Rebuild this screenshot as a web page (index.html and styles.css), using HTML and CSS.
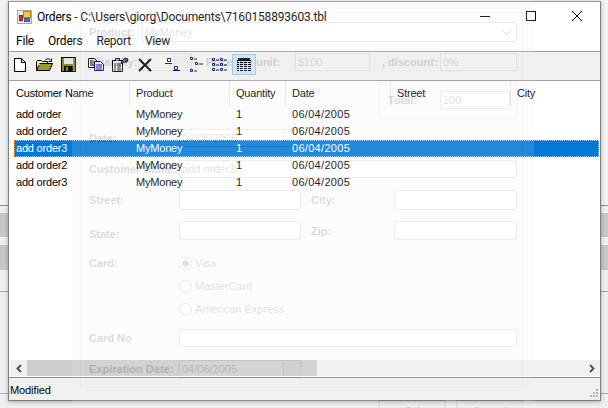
FILE: index.html
```html
<!DOCTYPE html>
<html lang="en">
<head>
<meta charset="utf-8">
<title>Orders</title>
<link rel="stylesheet" href="styles.css">
</head>
<body>
<div class="window">
  <div class="titlebar">
    <svg class="app-icon" width="15" height="14" viewBox="0 0 15 14"><rect x="0.500" y="0.500" width="14" height="13" fill="#e8e8e8" stroke="#a8a8a8"/><rect x="6.500" y="1.500" width="7" height="6" fill="#f5c83c" stroke="#b08a20"/><rect x="2.500" y="5.500" width="3" height="5" fill="#d8322c" stroke="#8a2020"/><rect x="7.500" y="8.500" width="5" height="3" fill="#3f80d8" stroke="#2a5aa0"/></svg>
    <span class="title-text">Orders - C:\Users\giorg\Documents\7160158893603.tbl</span>
    <div class="controls">
      <svg width="46" height="30" viewBox="0 0 46 30"><path d="M18 14.500h10" stroke="#000"/></svg>
      <svg width="46" height="30" viewBox="0 0 46 30"><rect x="18.500" y="9.500" width="9" height="9" fill="none" stroke="#000"/></svg>
      <svg width="46" height="30" viewBox="0 0 46 30"><path d="M18 9l10 10M28 9l-10 10" stroke="#000" fill="none"/></svg>
    </div>
  </div>
  <nav class="menubar">
    <span class="menu-item">File</span><span class="menu-item">Orders</span><span class="menu-item">Report</span><span class="menu-item">View</span>
  </nav>
  <div class="toolbar">
    <svg class="tool t-new" width="12" height="14" viewBox="0 0 12 14"><path d="M.5.500h7l4 4v9H.5z" fill="#fff" stroke="#000"/><path d="M7.500.5v4h4" fill="none" stroke="#000"/></svg>
    <svg class="tool t-open" width="17" height="13" viewBox="0 0 17 13"><path d="M.5 12.500v-9l1-1h4l1 1h5v2" fill="#f7f080" stroke="#000"/><path d="M.5 12.500l3-7h13l-3 7z" fill="#9a9a30" stroke="#000"/><path d="M2 5l2-1.500M2 7l2-1" stroke="#fff"/><path d="M9 2.500c1-2 4-2.500 6 0M15.500 .5v3h-3" fill="none" stroke="#000"/></svg>
    <svg class="tool t-save" width="15" height="15" viewBox="0 0 15 15"><rect x=".5" y=".5" width="14" height="14" fill="#8a8a20" stroke="#000"/><rect x="3" y="1" width="9" height="6" fill="#e4e4e4"/><rect x="3" y="9" width="9" height="5" fill="#101010"/><rect x="5" y="10" width="2" height="4" fill="#8a8a20"/></svg>
    <svg class="tool t-copy" width="16" height="13" viewBox="0 0 16 13"><path d="M.5.500h6l2 2v7h-8z" fill="#fff" stroke="#000"/><path d="M2 3h4M2 5h4M2 7h4" stroke="#000"/><path d="M6.500 3.500h6l3 3v6h-9z" fill="#fff" stroke="#000080"/><path d="M8 7h6M8 9h6M8 11h6" stroke="#000080"/></svg>
    <svg class="tool t-props" width="17" height="15" viewBox="0 0 17 15"><path d="M.5 3.500h10v11H.5z" fill="#fff" stroke="#000"/><path d="M2 7h2M5 7h4M2 9h2M5 9h4M2 11h2M5 11h4M2 13h2M5 13h4" stroke="#000"/><path d="M3.500 3.500v-2h4v2" fill="#ccc" stroke="#000"/><path d="M9 5l4-4 3 1-1 3h-3l-2 2z" fill="#5a7ab0" stroke="#000"/></svg>
    <svg class="tool t-del" width="14" height="14" viewBox="0 0 14 14"><path d="M1 1l12 12M13 1L1 13" stroke="#000" stroke-width="2" fill="none"/></svg>
    <svg class="tool t-v1" width="15" height="13" viewBox="0 0 15 13"><path d="M2.500.5h3v3h-3zM9.500 8.500h3v3h-3z" fill="#fff" stroke="#000080"/><path d="M0 5.500h7M8 12.500h7" stroke="#000080"/></svg>
    <svg class="tool t-v2" width="15" height="15" viewBox="0 0 15 15"><path d="M1.500.5h2v2h-2zM6.500 5.500h2v2h-2zM1.500 12.500h2v2h-2z" fill="#fff" stroke="#000080"/><path d="M5 2h3M10 7h4M5 14h3" stroke="#000"/></svg>
    <svg class="tool t-v3" width="15" height="13" viewBox="0 0 15 13"><path d="M.5.500h2v2h-2zM8.500.5h2v2h-2zM.5 5.500h2v2h-2zM8.500 5.500h2v2h-2zM.5 10.500h2v2h-2zM8.500 10.500h2v2h-2z" fill="#fff" stroke="#000080"/><path d="M4 2h3M12 2h3M4 7h3M12 7h3M4 12h3M12 12h3" stroke="#000"/></svg>
    <span class="tool-active">
      <svg width="16" height="13" viewBox="0 0 16 13"><rect x="2" y="0" width="12" height="2" fill="#000"/><path d="M1 2.500h14M1 4.500h14M1 6.500h14M1 8.500h14M1 10.500h14M1 12.500h14" stroke="#000"/><path d="M3.500 3v10M7.500 3v10M11.500 3v10" stroke="#cde4f7"/></svg>
    </span>
  </div>
  <div class="list">
    <div class="lv-row lv-head">
      <span class="col">Customer Name</span><span class="col">Product</span><span class="col">Quantity</span><span class="col">Date</span><span class="col">Street</span><span class="col">City</span>
    </div>
    <div class="lv-body">
      <div class="lv-row"><span class="col">add order</span><span class="col">MyMoney</span><span class="col">1</span><span class="col">06/04/2005</span></div>
      <div class="lv-row"><span class="col">add order2</span><span class="col">MyMoney</span><span class="col">1</span><span class="col">06/04/2005</span></div>
      <div class="lv-row selected"><span class="col">add order3</span><span class="col">MyMoney</span><span class="col">1</span><span class="col">06/04/2005</span></div>
      <div class="lv-row"><span class="col">add order2</span><span class="col">MyMoney</span><span class="col">1</span><span class="col">06/04/2005</span></div>
      <div class="lv-row"><span class="col">add order3</span><span class="col">MyMoney</span><span class="col">1</span><span class="col">06/04/2005</span></div>
    </div>
    <div class="hscroll">
      <span class="arrow"><svg width="8" height="9" viewBox="0 0 8 9"><path d="M6 1L2.500 4.500 6 8" fill="none" stroke="#555" stroke-width="2"/></svg></span>
      <span class="thumb"></span>
      <span class="arrow arrow-r"><svg width="8" height="9" viewBox="0 0 8 9"><path d="M2 1l3.500 3.500L2 8" fill="none" stroke="#555" stroke-width="2"/></svg></span>
    </div>
  </div>
  <div class="status">
    <span>Modified</span>
    <svg class="grip" width="10" height="10" viewBox="0 0 10 10"><path d="M7 0h2v2H7zM4 3h2v2H4zM7 3h2v2H7zM1 6h2v2H1zM4 6h2v2H4zM7 6h2v2H7z" fill="#b4b4b4"/></svg>
  </div>
</div>

<div class="ghost">
  <div class="group">
    <div class="g-row r-product"><label class="g-label w-product">Product:</label><div class="g-input w-combo">MyMoney<svg class="chev" width="10" height="6" viewBox="0 0 10 6"><path d="M1 1l4 4 4-4" fill="none" stroke="#000"/></svg></div></div>
    <div class="g-row r-qty"><label class="g-label w-product">Quantity:</label><div class="g-input w-spin">1<span class="spin"></span></div><label class="g-label w-price">Price per unit:</label><div class="g-input w-price-in">$100</div><label class="g-label w-disc">, discount:</label><div class="g-input w-disc-in">0%</div></div>
    <div class="total-box"><label class="g-label w-total">Total:</label><div class="g-input w-total-in">100</div></div>
    <div class="g-row r-date"><label class="g-label w-left">Date:</label><div class="g-input w-short">04/06/2005<span class="spin"></span></div></div>
    <div class="g-row r-cust"><label class="g-label w-left">Customer Name:</label><div class="g-input w-full">add order3</div></div>
    <div class="g-row r-street"><label class="g-label w-left">Street:</label><div class="g-input w-short"></div><label class="g-label w-city">City:</label><div class="g-input w-city-in"></div></div>
    <div class="g-row r-state"><label class="g-label w-left low">State:</label><div class="g-input w-short"></div><label class="g-label w-city">Zip:</label><div class="g-input w-city-in"></div></div>
    <div class="g-row r-card"><label class="g-label w-left">Card:</label><span class="radio on"></span><span class="radio-text">Visa</span></div>
    <div class="g-row r-radio"><span class="w-left"></span><span class="radio"></span><span class="radio-text">MasterCard</span></div>
    <div class="g-row r-radio"><span class="w-left"></span><span class="radio"></span><span class="radio-text">American Express</span></div>
    <div class="g-row r-no"><label class="g-label w-left">Card No</label><div class="g-input w-full"></div></div>
    <div class="g-row r-exp"><label class="g-label w-left">Expiration Date:</label><div class="g-input w-short">04/06/2005<span class="spin"></span></div></div>
  </div>
  <div class="g-buttons"><span class="g-btn">OK</span><span class="g-btn">Cancel</span></div>
</div>
</body>
</html>
```
FILE: styles.css
```css
html, body { margin: 0; height: 100%; }
body {
  position: relative;
  width: 608px;
  height: 408px;
  overflow: hidden;
  padding: 1px 0 0 8px;
  box-sizing: border-box;
  font: 12px Roboto, sans-serif;
  color: #000;
  background: linear-gradient(to bottom,
    #f3f3f3 0, #f3f3f3 205px, #8f8f9c 205px, #8f8f9c 206px,
    #efefef 206px, #efefef 213px, #c6c6cc 213px, #c6c6cc 237px,
    #efefef 237px, #efefef 245px, #c6c6cc 245px, #c6c6cc 270px,
    #efefef 270px, #efefef 291px, #a4a4ac 291px, #a4a4ac 292px,
    #efefef 292px, #efefef 393px, #b0b0b8 393px, #b0b0b8 394px,
    #efefef 394px);
}
.window {
  width: 593px;
  height: 400px;
  box-sizing: border-box;
  border: 1px solid #7e7e7e;
  border-top-color: #9a9a9a;
  background: #fff;
  display: flex;
  flex-direction: column;
  box-shadow: 0 1px 4px rgba(0, 0, 0, .3);
}
.titlebar {
  height: 29px;
  flex: none;
  display: flex;
  align-items: center;
  padding-left: 8px;
  position: relative;
}
.title-text { margin-left: 5px; letter-spacing: -.18px; white-space: nowrap; }
.controls { margin-left: auto; display: flex; align-self: flex-start; }
.controls svg { display: block; }
.menubar { height: 20px; flex: none; display: flex; align-items: center; padding-left: 7px; gap: 14px; letter-spacing: -.2px; }
.toolbar {
  height: 25px;
  flex: none;
  display: flex;
  align-items: center;
  background: #f0f0f0;
  border-top: 1px solid #a0a0a0;
  border-bottom: 1px solid #a0a0a0;
  box-sizing: content-box;
  padding: 0 0 3px 5px;
}
.tool { flex: none; display: block; }
.t-open { margin-left: 10px; }
.t-save { margin-left: 8px; }
.t-copy { margin-left: 12px; }
.t-props { margin-left: 8px; }
.t-del { margin-left: 9px; }
.t-v1 { margin-left: 13px; }
.t-v2 { margin-left: 9px; }
.t-v3 { margin-left: 8px; }
.tool-active {
  margin-left: 5px;
  width: 24px;
  height: 21px;
  box-sizing: border-box;
  background: #cde4f7;
  border: 1px solid #99c8ee;
  display: flex;
  align-items: center;
  justify-content: center;
}
.list {
  flex: 1;
  display: flex;
  flex-direction: column;
  padding-left: 5px;
  min-height: 0;
  font: 11px "Liberation Sans", sans-serif;
  letter-spacing: -.2px;
}
.lv-row {
  display: grid;
  grid-template-columns: 116px 100px 56px 105px 120px 1fr;
  height: 17px;
  line-height: 16px;
  margin-right: 1px;
  box-sizing: border-box;
}
.lv-row .col { padding-left: 6px; white-space: nowrap; }
.lv-row .col:first-child { padding-left: 2px; }
.lv-body .col:nth-child(4) { letter-spacing: .3px; }
.lv-head { height: 25px; line-height: 25px; flex: none; }
.lv-head .col { border-right: 1px solid #e5e5e5; box-sizing: border-box; }
.lv-head .col:last-child { border-right: 0; }
.lv-body { flex: 1; }
.selected {
  position: relative;
  background: #0078d7;
  color: #fff;
  outline: 1px dotted #a9d0f2;
  outline-offset: -1px;
}
.selected::before {
  content: "";
  position: absolute;
  left: 0;
  top: 0;
  bottom: 0;
  border-left: 1px dotted #f0a040;
}
.hscroll { height: 16px; margin-left: -4px; margin-bottom: 1px; display: flex; background: #f0f0f0; flex: none; }
.arrow { width: 17px; display: flex; align-items: center; justify-content: center; background: #f0f0f0; flex: none; }
.arrow-r { margin-left: auto; }
.thumb { width: 290px; background: #cdcdcd; flex: none; }
.status {
  height: 23px;
  flex: none;
  border-top: 1px solid #8a8a8a;
  background: #f0f0f0;
  display: flex;
  align-items: center;
  padding: 1px 0 0 1px;
  box-sizing: border-box;
  position: relative;
  font: 11px "Liberation Sans", sans-serif;
  letter-spacing: -.1px;
}
.grip { position: absolute; right: 1px; bottom: 1px; }

.ghost {
  position: absolute;
  left: 72px;
  top: 0;
  width: 462px;
  height: 408px;
  overflow: hidden;
  background: #f0f0f0;
  opacity: .14;
  font: 11px "Liberation Sans", sans-serif;
  padding: 12px 11px 0 8px;
  box-sizing: border-box;
}
.group { height: 376px; border: 1px solid #c0c0c0; box-sizing: border-box; padding-left: 8px; margin: 0; }
.g-row { display: flex; align-items: center; }
.g-label { font-weight: 700; flex: none; white-space: nowrap; }
.g-input {
  background: #fff;
  border: 1px solid #888;
  box-sizing: border-box;
  height: 100%;
  padding-left: 2px;
  display: flex;
  align-items: center;
  position: relative;
  flex: none;
  color: #333;
}
.r-product { height: 20px; margin-top: 9px; }
.r-qty { height: 18px; margin-top: 11px; }
.total-box { height: 39px; margin: 9px 0 0 290px; width: 138px; border: 1px solid #c0c0c0; box-sizing: border-box; display: flex; align-items: center; padding: 0 0 0 8px; }
.r-date { height: 18px; margin-top: 10px; }
.r-cust { height: 18px; margin-top: 13px; }
.r-street { height: 20px; margin-top: 12px; }
.r-state { height: 19px; margin-top: 11px; }
.r-card { height: 18px; margin-top: 14px; }
.r-radio { height: 18px; margin-top: 5px; }
.r-no { height: 18px; margin-top: 11px; }
.r-exp { height: 18px; margin-top: 13px; }
.w-product { width: 53px; }
.w-combo { width: 375px; }
.w-spin { width: 50px; }
.w-price { width: 103px; text-align: right; padding-right: 15px; box-sizing: border-box; }
.w-price-in { width: 75px; }
.w-disc { width: 70px; padding-left: 12px; box-sizing: border-box; }
.w-disc-in { width: 77px; }
.w-total { width: 52px; }
.w-total-in { width: 70px; height: 18px; }
.w-left { width: 90px; flex: none; }
.low { padding-top: 6px; }
.w-short { width: 122px; }
.w-full { width: 338px; }
.w-city { width: 93px; padding-left: 10px; box-sizing: border-box; }
.w-city-in { width: 123px; }
.radio { width: 13px; height: 13px; border: 1px solid #555; border-radius: 50%; box-sizing: border-box; flex: none; background: #fff; }
.on { background: radial-gradient(circle, #333 0 3px, #fff 3.500px); }
.radio-text { margin-left: 3px; color: #222; }
.spin { position: absolute; right: 1px; top: 1px; bottom: 1px; width: 15px; border-left: 1px solid #888; background: #e8e8e8; }
.chev { position: absolute; right: 4px; top: 7px; }
.g-buttons { display: flex; gap: 10px; justify-content: flex-end; margin-top: 12px; }
.g-btn { width: 67px; height: 22px; border: 1px solid #666; box-sizing: border-box; text-align: center; line-height: 20px; background: #e8e8e8; }
```
